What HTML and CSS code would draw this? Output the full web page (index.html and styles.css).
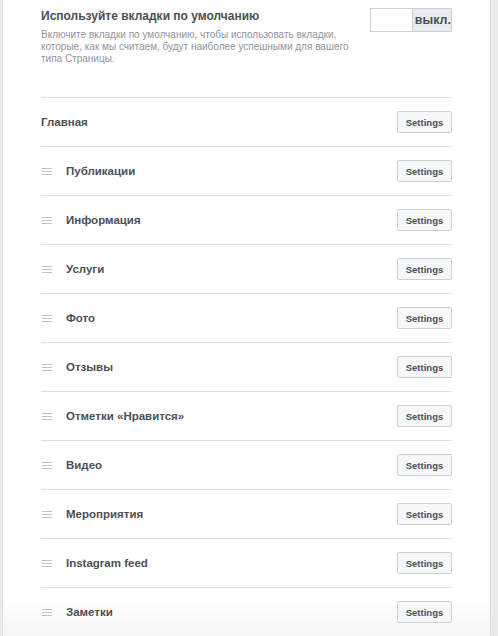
FILE: index.html
```html
<!DOCTYPE html>
<html lang="ru">
<head>
  <meta charset="UTF-8" />
  <meta name="viewport" content="width=device-width, initial-scale=1.0"/>
  <title>Вкладки</title>
  <link rel="stylesheet" href="styles.css">
</head>
<body>
  <div class="panel">
    <div class="header">
      <div class="header-text">
        <div class="title">Используйте вкладки по умолчанию</div>
        <div class="desc">Включите вкладки по умолчанию, чтобы использовать вкладки, которые, как мы считаем, будут наиболее успешными для вашего типа Страницы.</div>
      </div>
      <div class="toggle">
        <span class="toggle-off"></span>
        <span class="toggle-label">выкл.</span>
      </div>
    </div>

    <div class="row">
      <span class="label">Главная</span>
      <button class="btn">Settings</button>
    </div>
    <div class="row">
      <span class="drag"><i></i><i></i><i></i></span>
      <span class="label">Публикации</span>
      <button class="btn">Settings</button>
    </div>
    <div class="row">
      <span class="drag"><i></i><i></i><i></i></span>
      <span class="label">Информация</span>
      <button class="btn">Settings</button>
    </div>
    <div class="row">
      <span class="drag"><i></i><i></i><i></i></span>
      <span class="label">Услуги</span>
      <button class="btn">Settings</button>
    </div>
    <div class="row">
      <span class="drag"><i></i><i></i><i></i></span>
      <span class="label">Фото</span>
      <button class="btn">Settings</button>
    </div>
    <div class="row">
      <span class="drag"><i></i><i></i><i></i></span>
      <span class="label">Отзывы</span>
      <button class="btn">Settings</button>
    </div>
    <div class="row">
      <span class="drag"><i></i><i></i><i></i></span>
      <span class="label">Отметки «Нравится»</span>
      <button class="btn">Settings</button>
    </div>
    <div class="row">
      <span class="drag"><i></i><i></i><i></i></span>
      <span class="label">Видео</span>
      <button class="btn">Settings</button>
    </div>
    <div class="row">
      <span class="drag"><i></i><i></i><i></i></span>
      <span class="label">Мероприятия</span>
      <button class="btn">Settings</button>
    </div>
    <div class="row">
      <span class="drag"><i></i><i></i><i></i></span>
      <span class="label">Instagram feed</span>
      <button class="btn">Settings</button>
    </div>
    <div class="row">
      <span class="drag"><i></i><i></i><i></i></span>
      <span class="label">Заметки</span>
      <button class="btn">Settings</button>
    </div>
  </div>
</body>
</html>
```

FILE: styles.css
```css
html, body {
  margin: 0;
  height: 636px;
  overflow: hidden;
}
body {
  font-family: "Liberation Sans", Arial, sans-serif;
  background: #e9ebee;
  color: #4b4f56;
}
.panel {
  margin-left: 2px;
  width: 489px;
  box-sizing: border-box;
  border-left: 1px solid #dddfe2;
  border-right: 1px solid #dddfe2;
  padding: 0 38px 0 38px;
  background: linear-gradient(to bottom, #fff calc(100% - 40px), #f5f6f7);
  height: 636px;
}
.header {
  height: 97px;
  box-sizing: border-box;
  padding-top: 8px;
  display: flex;
  justify-content: space-between;
  align-items: flex-start;
}
.title {
  font-size: 12px;
  font-weight: bold;
  line-height: 16px;
}
.desc {
  margin-top: 5px;
  max-width: 315px;
  font-size: 10px;
  line-height: 12px;
  color: #90949c;
}
.toggle {
  display: flex;
  height: 24px;
  border: 1px solid #ccd0d5;
  box-sizing: border-box;
  width: 82px;
}
.toggle-off {
  width: 41px;
  background: #fff;
  border-right: 1px solid #ccd0d5;
}
.toggle-label {
  flex: 1;
  background: #e9ebee;
  font-size: 12.5px;
  font-weight: bold;
  line-height: 22px;
  text-align: right;
  padding-right: 0;
}
.row {
  height: 49px;
  box-sizing: border-box;
  border-top: 1px solid #dddfe2;
  display: flex;
  align-items: center;
}
.label {
  flex: 1;
  font-size: 11.5px;
  font-weight: bold;
}
.drag {
  width: 10px;
  margin: 0 14px 0 1px;
  display: flex;
  flex-direction: column;
  gap: 2px;
}
.drag i {
  display: block;
  height: 1px;
  background: #bec2c9;
}
.btn {
  width: 55px;
  height: 22px;
  padding: 0;
  background: #f6f7f9;
  border: 1px solid #ced0d4;
  border-radius: 2px;
  font-family: inherit;
  font-size: 9.5px;
  font-weight: bold;
  color: #4b4f56;
}
```
